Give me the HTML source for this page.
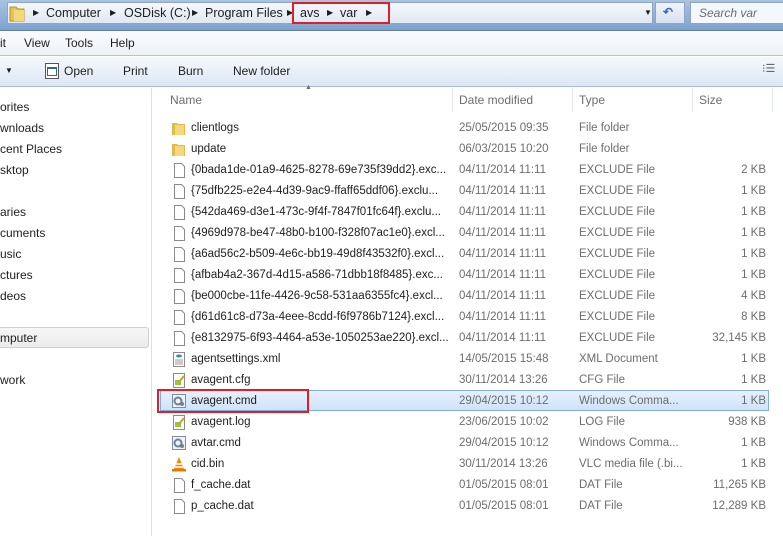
<!DOCTYPE html>
<html><head><meta charset="utf-8"><style>
*{margin:0;padding:0;box-sizing:border-box}
body{width:783px;height:536px;overflow:hidden;background:#fff;font-family:"Liberation Sans",sans-serif;font-size:12px;color:#1e1e1e;position:relative}
.a{position:absolute;white-space:nowrap}
.top{left:0;top:0;width:783px;height:31px;background:linear-gradient(#a9c3e2,#7ea2cf);border-bottom:1px solid #5d7fa9}
.addr{left:7px;top:2px;width:646px;height:22px;background:linear-gradient(#f5f8fc,#dfe8f3);border:1px solid #8fa6c2}
.ref{left:655px;top:2px;width:30px;height:22px;background:linear-gradient(#f0f4fa,#d6e2f0);border:1px solid #8fa6c2}
.srch{left:690px;top:2px;width:100px;height:22px;background:#f4f7fb;border:1px solid #8fa6c2;color:#6d6d6d;font-style:italic;padding:3px 0 0 8px;font-size:12px}
.menu{left:0;top:32px;width:783px;height:24px;background:linear-gradient(#f9fbfe,#edf2f8);border-bottom:1px solid #b6c3d3}
.tool{left:0;top:57px;width:783px;height:30px;background:linear-gradient(#f4f8fc,#dde8f4);border-bottom:1px solid #a7bad0}
.side{left:0;top:88px;width:152px;height:448px;background:#fff;border-right:1px solid #d8e0ea}
.sel{left:160px;top:390px;width:609px;height:21px;background:linear-gradient(#e6f1fc,#cfe3f8);border:1px solid #84acdd}
.red{border:2px solid #e01e26}
.g{color:#6d6d6d}
.arr{font-size:8px}
.r{font-size:11.5px}
</style></head><body>
<div class="a top"></div>
<div class="a addr"></div>
<svg class="a" style="left:9px;top:4px" width="16" height="18"><path d="M1 3h6l2 2h6v12H1z" fill="#e6c25a" stroke="#b8902a"/><path d="M5 6h10v11H5z" fill="#f4d97a"/></svg>
<div class="a arr" style="left:33px;top:8px">▶</div>
<div class="a" style="left:46px;top:6px;font-size:12.5px">Computer</div>
<div class="a arr" style="left:110px;top:8px">▶</div>
<div class="a" style="left:124px;top:6px;font-size:12.5px">OSDisk (C:)</div>
<div class="a arr" style="left:192px;top:8px">▶</div>
<div class="a" style="left:205px;top:6px;font-size:12.5px">Program Files</div>
<div class="a arr" style="left:287px;top:8px">▶</div>
<div class="a" style="left:300px;top:6px;font-size:12.5px">avs</div>
<div class="a arr" style="left:327px;top:8px">▶</div>
<div class="a" style="left:340px;top:6px;font-size:12.5px">var</div>
<div class="a arr" style="left:366px;top:8px">▶</div>
<div class="a red" style="left:292px;top:2px;width:98px;height:22px"></div>
<div class="a" style="left:644px;top:8px;font-size:8px">▼</div>
<div class="a ref"></div>
<div class="a" style="left:663px;top:5px;color:#2f6fb5;font-size:12px;font-weight:bold">↶</div>
<div class="a srch">Search var</div>
<div class="a menu"></div>
<div class="a" style="left:0;top:36px">it</div>
<div class="a" style="left:24px;top:36px">View</div>
<div class="a" style="left:65px;top:36px">Tools</div>
<div class="a" style="left:110px;top:36px">Help</div>
<div class="a tool"></div>
<div class="a" style="left:5px;top:66px;font-size:8px">▼</div>
<svg class="a" style="left:45px;top:63px" width="14" height="16"><rect x="0.5" y="0.5" width="13" height="15" fill="#fff" stroke="#555"/><rect x="2" y="4" width="10" height="9" fill="#3a5fa8"/><rect x="3" y="6" width="8" height="6" fill="#fff"/></svg>
<div class="a" style="left:64px;top:64px">Open</div>
<div class="a" style="left:123px;top:64px">Print</div>
<div class="a" style="left:178px;top:64px">Burn</div>
<div class="a" style="left:233px;top:64px">New folder</div>
<div class="a" style="left:762px;top:62px;color:#666;font-size:11px">⁝☰</div>
<div class="a side"></div>
<div class="a" style="left:0;top:100px">orites</div>
<div class="a" style="left:0;top:121px">wnloads</div>
<div class="a" style="left:0;top:142px">cent Places</div>
<div class="a" style="left:0;top:163px">sktop</div>
<div class="a" style="left:0;top:205px">aries</div>
<div class="a" style="left:0;top:226px">cuments</div>
<div class="a" style="left:0;top:247px">usic</div>
<div class="a" style="left:0;top:268px">ctures</div>
<div class="a" style="left:0;top:289px">deos</div>
<div class="a" style="left:-4px;top:327px;width:153px;height:21px;background:linear-gradient(#f6f6f6,#ebebeb);border:1px solid #d0d0d0;border-radius:3px"></div>
<div class="a" style="left:0;top:331px">mputer</div>
<div class="a" style="left:0;top:373px">work</div>
<div class="a g" style="left:170px;top:93px">Name</div>
<div class="a g" style="left:305px;top:84px;font-size:7px">▲</div>
<div class="a" style="left:452px;top:88px;width:1px;height:24px;background:#e3e8ee"></div>
<div class="a g" style="left:459px;top:93px">Date modified</div>
<div class="a" style="left:572px;top:88px;width:1px;height:24px;background:#e3e8ee"></div>
<div class="a g" style="left:579px;top:93px">Type</div>
<div class="a" style="left:692px;top:88px;width:1px;height:24px;background:#e3e8ee"></div>
<div class="a g" style="left:699px;top:93px">Size</div>
<div class="a" style="left:772px;top:88px;width:1px;height:24px;background:#e3e8ee"></div>
<div class="a sel"></div>
<div id="rows"></div>
<div class="a red" style="left:157px;top:389px;width:152px;height:24px"></div>
<script>
var R=[["f","clientlogs","25/05/2015 09:35","File folder",""],["f","update","06/03/2015 10:20","File folder",""],
["d","{0bada1de-01a9-4625-8278-69e735f39dd2}.exc...","04/11/2014 11:11","EXCLUDE File","2 KB"],
["d","{75dfb225-e2e4-4d39-9ac9-ffaff65ddf06}.exclu...","04/11/2014 11:11","EXCLUDE File","1 KB"],
["d","{542da469-d3e1-473c-9f4f-7847f01fc64f}.exclu...","04/11/2014 11:11","EXCLUDE File","1 KB"],
["d","{4969d978-be47-48b0-b100-f328f07ac1e0}.excl...","04/11/2014 11:11","EXCLUDE File","1 KB"],
["d","{a6ad56c2-b509-4e6c-bb19-49d8f43532f0}.excl...","04/11/2014 11:11","EXCLUDE File","1 KB"],
["d","{afbab4a2-367d-4d15-a586-71dbb18f8485}.exc...","04/11/2014 11:11","EXCLUDE File","1 KB"],
["d","{be000cbe-11fe-4426-9c58-531aa6355fc4}.excl...","04/11/2014 11:11","EXCLUDE File","4 KB"],
["d","{d61d61c8-d73a-4eee-8cdd-f6f9786b7124}.excl...","04/11/2014 11:11","EXCLUDE File","8 KB"],
["d","{e8132975-6f93-4464-a53e-1050253ae220}.excl...","04/11/2014 11:11","EXCLUDE File","32,145 KB"],
["x","agentsettings.xml","14/05/2015 15:48","XML Document","1 KB"],
["t","avagent.cfg","30/11/2014 13:26","CFG File","1 KB"],
["c","avagent.cmd","29/04/2015 10:12","Windows Comma...","1 KB"],
["t","avagent.log","23/06/2015 10:02","LOG File","938 KB"],
["c","avtar.cmd","29/04/2015 10:12","Windows Comma...","1 KB"],
["v","cid.bin","30/11/2014 13:26","VLC media file (.bi...","1 KB"],
["d","f_cache.dat","01/05/2015 08:01","DAT File","11,265 KB"],
["d","p_cache.dat","01/05/2015 08:01","DAT File","12,289 KB"]];
var I={f:'<path d="M1 3h5l1 1h7v11H1z" fill="#e2bb4e"/><path d="M4 5h9v10H4z" fill="#f5d87c"/>',
d:'<path d="M3.5 1.5h7l3 3v11h-10z" fill="#fff" stroke="#8a8a8a"/>',
x:'<path d="M2.5 1.5h11v14h-11z" fill="#fff" stroke="#8a8a8a"/><ellipse cx="8" cy="5" rx="3" ry="1.5" fill="#3a8ab0"/><path d="M4 9h8M4 11h8M4 13h8" stroke="#999"/>',
t:'<path d="M2.5 1.5h11v14h-11z" fill="#fff" stroke="#8a8a8a"/><rect x="4" y="8" width="6" height="5" fill="#9bc43a"/><path d="M8 10l5-6" stroke="#c9a227" stroke-width="2"/>',
c:'<rect x="1.5" y="1.5" width="13" height="13" fill="#eef3f8" stroke="#7d8fa6"/><circle cx="7" cy="8" r="3.5" fill="none" stroke="#6f7f95" stroke-width="2"/><circle cx="11" cy="11" r="2" fill="#6f7f95"/>',
v:'<path d="M8 1l5 12H3z" fill="#f08a00"/><path d="M5 8h6M4 11h8" stroke="#fff" stroke-width="1.5"/><rect x="1" y="13" width="14" height="2.5" fill="#e07a00"/>'};
var h='';R.forEach(function(r,i){var y=118+i*21;
h+='<svg class="a" style="left:171px;top:'+(y+2)+'px" width="16" height="17">'+I[r[0]]+'</svg>';
h+='<div class="a r" style="left:191px;top:'+(y+4)+'px">'+r[1]+'</div>';
h+='<div class="a g r" style="left:459px;top:'+(y+4)+'px">'+r[2]+'</div>';
h+='<div class="a g r" style="left:579px;top:'+(y+4)+'px">'+r[3]+'</div>';
h+='<div class="a g r" style="right:17px;top:'+(y+4)+'px">'+r[4]+'</div>';});
document.getElementById('rows').innerHTML=h;
</script>
</body></html>
